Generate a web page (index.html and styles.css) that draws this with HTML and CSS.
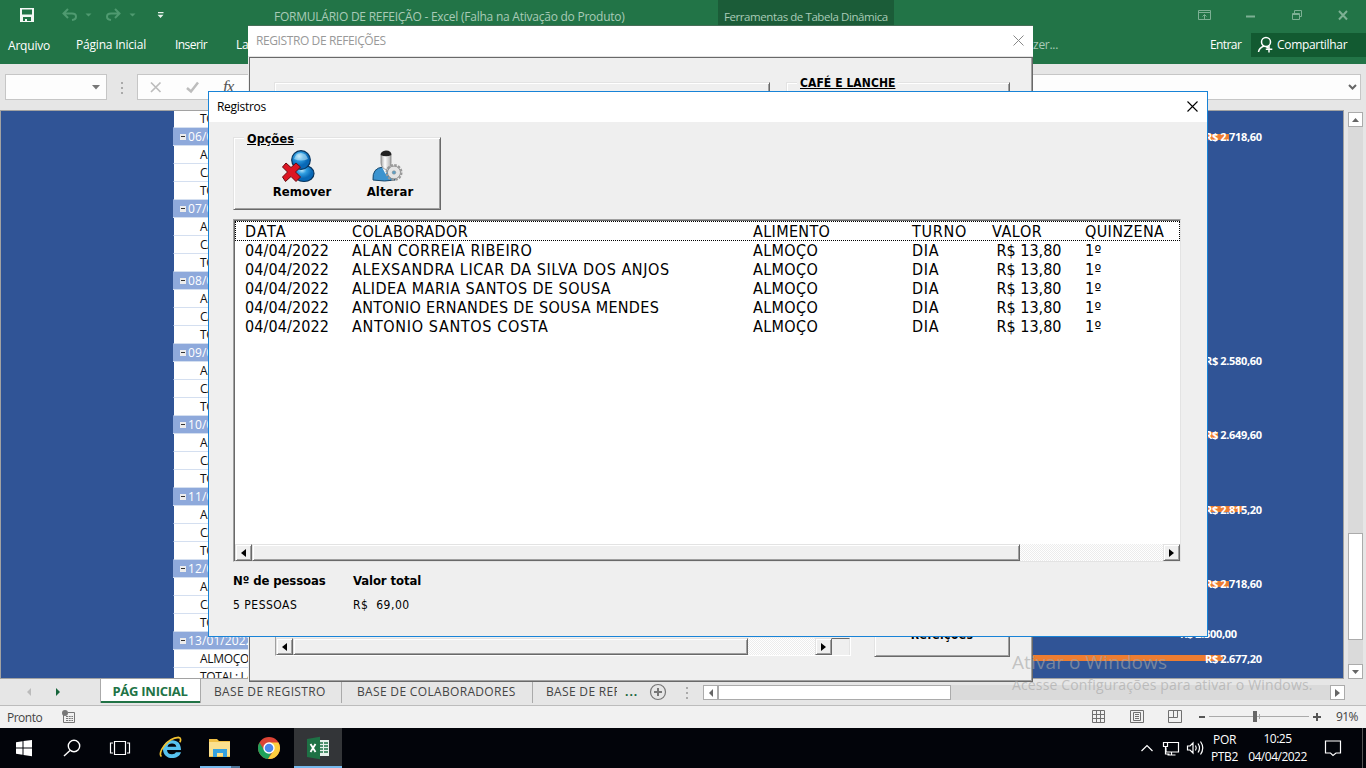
FILE: index.html
```html
<!DOCTYPE html>
<html lang="pt-BR">
<head>
<meta charset="utf-8">
<title>FORMULÁRIO DE REFEIÇÃO - Excel</title>
<link rel="stylesheet" href="styles.css">
</head>
<body>
<div class="desktop">
  <header class="titlebar">
    <svg class="quick" width="180" height="30" viewBox="0 0 180 30">
      <path fill="#f4f8f5" fill-rule="evenodd" d="M20 8h14v14H20zM22 9.500v5h10v-5zM23 17v4h2v-2h2v2h4v-4z"/>
      <g fill="none" stroke="#4f9a70" stroke-width="2"><path d="M68 9l-4.500 4.500 4.500 4.500M64 13.500h8q4 0 4 3.200 0 2.800-4 3.300"/><path d="M115 9l4.500 4.500-4.500 4.500M119 13.500h-8q-4 0-4 3.200 0 2.800 4 3.300"/></g>
      <path fill="#4f9a70" d="M85.500 13.500h6l-3 3zM129.500 13.500h6l-3 3z"/><path fill="#e8f2ec" d="M158 12h5.500v1.300H158zM157.500 14.800h6l-3 3.200z"/>
    </svg>
    <span class="doc-name">FORMULÁRIO DE REFEIÇÃO - Excel (Falha na Ativação do Produto)</span>
    <span class="context-tab">Ferramentas de Tabela Dinâmica</span>
    <svg class="win-controls" width="160" height="30" viewBox="1196 0 160 30" fill="none" stroke="#7db094">
      <path d="M1198.500 10.500h12v9h-12zM1198.500 12.500h12M1204.500 19v-4.500M1202.500 16.500l2-2 2 2"/><path d="M1246 16.500h9" stroke-width="2"/>
      <path d="M1292.500 13.500h7v6h-7zM1292 14.500h8M1294.500 13v-2.500h7v6h-2"/><path d="M1339 11l8 8.500M1347 11l-8 8.500" stroke-width="2"/>
    </svg>
  </header>
  <nav class="ribbon">
    <span class="file">Arquivo</span><span class="home">Página Inicial</span><span class="insert">Inserir</span><span class="lay">La</span>
    <span class="tell">fazer...</span><span class="sign">Entrar</span>
    <span class="share"><svg width="18" height="18" viewBox="0 0 18 18" fill="none" stroke="#fff" stroke-width="1.500"><circle cx="9" cy="6" r="4.500"/><path d="M7 10q-5 2-5.500 6M9 10.500l2 1.500M12 10v6.500M8.800 13.200h6.500"/></svg>Compartilhar</span>
  </nav>
  <section class="formula">
    <div class="namebox"><svg width="8" height="5"><path d="M0 0h8l-4 4.500z" fill="#777"/></svg></div>
    <div class="dots"><i></i><i></i><i></i></div>
    <div class="formula-box">
      <svg width="110" height="26" viewBox="138 75 110 26" fill="none"><path d="M151 82.500l9.500 9.500M160.500 82.500l-9.500 9.500" stroke="#bdbdbd" stroke-width="1.700"/><path d="M187 88l4 3.500 7-9" stroke="#bdbdbd" stroke-width="2.500"/></svg><em class="fx">fx</em>
      <svg class="expand" width="9" height="7" fill="none"><path d="M1 1l3.500 3.500L8 1" stroke="#666" stroke-width="2"/></svg>
    </div>
  </section>
  <section class="workspace">
    <div class="sheet">
      <div class="pivot">
        <p class="first">TOTAL</p>
        <p class="day"><i></i>06/01/2022</p><p>ALMOÇO</p><p>CAFÉ</p><p>TOTAL</p>
        <p class="day"><i></i>07/01/2022</p><p>ALMOÇO</p><p>CAFÉ</p><p>TOTAL</p>
        <p class="day"><i></i>08/01/2022</p><p>ALMOÇO</p><p>CAFÉ</p><p>TOTAL</p>
        <p class="day"><i></i>09/01/2022</p><p>ALMOÇO</p><p>CAFÉ</p><p>TOTAL</p>
        <p class="day"><i></i>10/01/2022</p><p>ALMOÇO</p><p>CAFÉ</p><p>TOTAL</p>
        <p class="day"><i></i>11/01/2022</p><p>ALMOÇO</p><p>CAFÉ</p><p>TOTAL</p>
        <p class="day"><i></i>12/01/2022</p><p>ALMOÇO</p><p>CAFÉ</p><p>TOTAL</p>
        <p class="day"><i></i>13/01/2022</p><p>ALMOÇO</p><p>TOTAL: LANCHE</p>
      </div>
      <div class="chart">
        <div class="bar" style="top:23px;width:229px"></div><b style="top:18px">R$ 2.718,60</b>
        <div class="bar" style="top:247px;width:208px"></div><b style="top:242px">R$ 2.580,60</b>
        <div class="bar" style="top:321px;width:218px"></div><b style="top:316px">R$ 2.649,60</b>
        <div class="bar" style="top:395px;width:242px"></div><b style="top:391px">R$ 2.815,20</b>
        <div class="bar" style="top:470px;width:229px"></div><b style="top:465px">R$ 2.718,60</b>
        <b class="low" style="top:515px">R$ 2.300,00</b>
        <div class="bar" style="top:544px;width:223px"></div><b style="top:540px">R$ 2.677,20</b>
      </div>
    </div>
    <div class="vscroll">
      <span class="sb"><svg width="7" height="4"><path d="M0 4h7l-3.500-4z" fill="#666"/></svg></span>
      <span class="vthumb"></span>
      <span class="sb vdown"><svg width="7" height="4"><path d="M0 0h7l-3.500 4z" fill="#666"/></svg></span>
    </div>
  </section>
  <nav class="tabs">
    <svg class="tabnav" width="100" height="28"><path d="M31 9v8l-4-4z" fill="#bbb"/><path d="M56 9v8l4-4z" fill="#16653b"/></svg>
    <b class="active">PÁG INICIAL</b><span class="t1">BASE DE REGISTRO</span><span class="t2">BASE DE COLABORADORES</span><span class="t3"><i>BASE DE REF</i></span>
    <b class="more">...</b>
    <svg class="plus" width="18" height="18" fill="none" stroke="#777"><circle cx="9" cy="9" r="7.500" stroke-width="1.200"/><path d="M5 9h8M9 5v8" stroke-width="2"/></svg>
    <div class="dots tabdots"><i></i><i></i><i></i></div>
    <div class="hscroll"><span class="sb"><svg width="4" height="8"><path d="M4 0v8l-4-4z" fill="#666"/></svg></span><span class="hthumb"></span><span class="sb hright"><svg width="5" height="8"><path d="M0 0v8l5-4z" fill="#666"/></svg></span></div>
  </nav>
  <footer class="status">
    <span class="ready">Pronto</span>
    <svg width="14" height="14" viewBox="0 0 14 14"><path d="M1.500 5v7.500h11v-10H6" fill="none" stroke="#777"/><circle cx="3" cy="3" r="3" fill="#777"/><path d="M4 6.500h7M4 8.500h7M4 10.500h7" stroke="#777" stroke-dasharray="2 .7"/></svg>
    <svg class="views" width="240" height="22" viewBox="1090 706 240 22" fill="none" stroke="#707070">
      <path d="M1092.500 710.500h12v12h-12zM1092 714.500h13M1092 718.500h13M1096.500 710v13M1100.500 710v13"/>
      <path d="M1130.500 710.500h13v12h-13zM1133.500 712.500h7v8h-7zM1135 714.500h4M1135 716.500h4M1135 718.500h4"/>
      <path d="M1168.500 710.500h13v12h-13zM1173.500 710v7.500M1168 717.500h9.500v-7"/>
      <path d="M1199 717h6M1313 717h8M1317 713v8" stroke="#555" stroke-width="2"/><path d="M1209 716.500h100M1259.500 714v5" stroke="#aaa"/><path d="M1255 711v11" stroke="#666" stroke-width="4"/>
    </svg>
    <span class="pct">91%</span>
  </footer>
  <footer class="taskbar">
    <svg class="apps" width="342" height="40" viewBox="0 728 342 40">
      <path fill="#333538" d="M294 728h48v40h-48z"/><path fill="#76b9ed" d="M200 766h31v2h-31zM294 766h48v2h-48z"/><path fill="#4c7396" d="M231 766h9v2h-9z"/>
      <path fill="#fff" d="M16 742.200l6.500-.9v6.200H16zM23.500 741.100l8.500-1.200v7.600h-8.500zM16 748.500h6.500v6.200l-6.500-.9zM23.500 748.500H32v7.700l-8.500-1.200z"/>
      <g fill="none" stroke="#fff" stroke-width="1.400"><circle cx="74" cy="746" r="5.700"/><path d="M70 750.500l-6 5.500"/><path stroke-width="1.200" d="M114.500 741.500h11v13h-11zM113 743h-2.500v10h2.500M127 743h2.500v10H127"/></g>
      <path d="M181 750h-14q.3 4.200 5 4.200 3 0 4-2h5c-1 3.800-4.500 5.800-9 5.800-5.500 0-9-3.700-9-8.800s4-9 9.100-9c5.700 0 8.900 3.700 8.900 9.800zM167.500 746.800h8.800q-.6-3.300-4.300-3.300t-4.500 3.300z" fill="#57c3ef" fill-rule="evenodd"/>
      <path d="M161.500 756.500c-4.500-3 5.500-18.500 17-19.200 2.500 0 2.500 3.500 1.300 5" fill="none" stroke="#f2c230" stroke-width="1.700"/>
      <path d="M209 739h8l2 2h11v16h-21z" fill="#f0bf45"/><path d="M209 742h21v14h-21z" fill="#fbe08e"/><path d="M213 757v-8h14v8h-4v-4h-6v4z" fill="#36a2df"/>
      <g><circle cx="269" cy="748" r="11" fill="#dc4335"/><path d="M259.500 742.500A11 11 0 0 0 268 759l5-9-9 0z" fill="#1ea25a"/><path d="M269 742.500h9.500A11 11 0 0 1 268 759l5.500-8z" fill="#fdcf3f"/><circle cx="269" cy="748" r="5.700" fill="#fff"/><circle cx="269" cy="748" r="4.300" fill="#4b86ed"/></g>
      <path d="M318 740h11v16h-11z" fill="#e7f1eb"/><path d="M320 743h3M324 743h4M320 746h3M324 746h4M320 749h3M324 749h4M320 752h3M324 752h4" stroke="#1e7145" stroke-width="1.500"/><path d="M307 739l13-2.300v22.500l-13-2.300z" fill="#1e7145"/><path d="M310.500 744l5 8M315.500 744l-5 8" stroke="#fff" stroke-width="1.800"/>
    </svg>
    <svg class="tray" width="68" height="40" viewBox="1138 728 68 40" fill="none" stroke="#fff" stroke-width="1.200"><path d="M1141.500 751l5.500-5.500 5.500 5.500"/><path d="M1168 742.500h10.500v9.500H1166v-4.500M1171.500 752v3M1167.500 755h8M1163.500 742.500h4v4h-4zM1165.500 747v7h4"/><path d="M1187.500 746v4h2.500l3 3v-10l-3 3zM1195.500 745.500q1.500 2.500 0 5M1198 743.500q3 4.500 0 9M1200.500 741.500q4.500 6.500 0 13"/></svg>
    <div class="lang">POR<br>PTB2</div><div class="clock">10:25<br>04/04/2022</div>
    <svg class="notice" width="18" height="18" fill="none" stroke="#fff" stroke-width="1.200"><path d="M1.500 2h15v12H12l-3 2.500L6.500 14h-5z"/></svg>
    <i class="peek"></i>
  </footer>

  <section class="form-window">
    <div class="form-title"><span>REGISTRO DE REFEIÇÕES</span><svg width="11" height="11" stroke="#888"><path d="M.5.5l10 10M10.500.5l-10 10"/></svg></div>
    <div class="form-body">
      <div class="form-top"><div class="frame f1"></div><div class="frame f2"><b>CAFÉ E LANCHE</b></div></div>
      <div class="form-bottom">
        <div class="list-end"><span class="btn arrow"><svg width="5" height="8"><path d="M5 0v8l-5-4z"/></svg></span><span class="btn grow"></span><span class="hatch"></span><span class="btn arrow"><svg width="5" height="8"><path d="M0 0v8l5-4z"/></svg></span><span class="corner"></span></div>
        <div class="btn refs"><b>Refeições</b></div>
      </div>
    </div>
  </section>

  <section class="records">
    <div class="rec-title"><span>Registros</span><svg width="11" height="11" stroke="#000" stroke-width="1.100"><path d="M.5.5l10 10M10.500.5l-10 10"/></svg></div>
    <div class="rec-body">
      <div class="frame options"><b class="legend">Opções</b>
        <button class="opt rem"><svg width="34" height="34" viewBox="0 0 34 34">
          <defs><radialGradient id="blue" cx=".4" cy=".3"><stop offset="0" stop-color="#b7e4fa"/><stop offset=".45" stop-color="#2f9de0"/><stop offset="1" stop-color="#0868b6"/></radialGradient></defs>
          <ellipse cx="23" cy="24.500" rx="10" ry="8" fill="url(#blue)" stroke="#07335c" stroke-width="1.200"/><circle cx="20" cy="11" r="9.300" fill="url(#blue)" stroke="#07335c" stroke-width="1.200"/><path d="M13 10q2-6 7-6t7 6q-7 3-14 0" fill="#d8f1fc" opacity=".5"/>
          <path d="M5 14l5 4.500 5-4.500 4.500 4-5 5 5 5-4.500 4.500-5-5-5.500 5L1.500 28l5-5-5-5z" fill="#dc1522" stroke="#650b10"/></svg><span>Remover</span></button>
        <button class="opt alt"><svg width="34" height="34" viewBox="0 0 34 34">
          <defs><linearGradient id="face"><stop offset="0" stop-color="#aaa"/><stop offset=".4" stop-color="#fff"/><stop offset="1" stop-color="#aaa"/></linearGradient></defs>
          <path d="M3 31q-1-12 10-13h3q8 1 9 13-10 2-22 0z" fill="#3b93cf" stroke="#17476b"/><path d="M12 18l3.500 7 4-7z" fill="#fff"/><path d="M11 6q5-5 10 0v8q-.5 5.500-5 6.500-4.500-1-5-6.500z" fill="url(#face)" stroke="#777" stroke-width=".7"/><path d="M10.500 6q0-4 5.500-4.500 5.500 0 5.500 4.500-5.500 2.500-11 0z" fill="#222"/>
          <circle cx="24" cy="23.500" r="6.500" fill="#dedede" stroke="#777" stroke-width=".8"/><circle cx="24" cy="23.500" r="7.500" fill="none" stroke="#999" stroke-width="2" stroke-dasharray="2.500 1.430"/><circle cx="24" cy="23.500" r="5.500" fill="#e4e4e4"/><circle cx="24" cy="23.500" r="1.800" fill="#5e9fc5" stroke="#888" stroke-width=".5"/></svg><span>Alterar</span></button>
      </div>
      <div class="listbox">
        <div class="row head"><span>DATA</span><span>COLABORADOR</span><span>ALIMENTO</span><span>TURNO</span><span>VALOR</span><span>QUINZENA</span></div>
        <div class="row"><span>04/04/2022</span><span>ALAN CORREIA RIBEIRO</span><span>ALMOÇO</span><span>DIA</span><span>&nbsp;R$ 13,80</span><span>1º</span></div>
        <div class="row"><span>04/04/2022</span><span>ALEXSANDRA LICAR DA SILVA DOS ANJOS</span><span>ALMOÇO</span><span>DIA</span><span>&nbsp;R$ 13,80</span><span>1º</span></div>
        <div class="row"><span>04/04/2022</span><span>ALIDEA MARIA SANTOS DE SOUSA</span><span>ALMOÇO</span><span>DIA</span><span>&nbsp;R$ 13,80</span><span>1º</span></div>
        <div class="row"><span>04/04/2022</span><span>ANTONIO ERNANDES DE SOUSA MENDES</span><span>ALMOÇO</span><span>DIA</span><span>&nbsp;R$ 13,80</span><span>1º</span></div>
        <div class="row"><span>04/04/2022</span><span>ANTONIO SANTOS COSTA</span><span>ALMOÇO</span><span>DIA</span><span>&nbsp;R$ 13,80</span><span>1º</span></div>
        <div class="list-scroll"><span class="btn arrow"><svg width="5" height="8"><path d="M5 0v8l-5-4z"/></svg></span><span class="btn grow"></span><span class="hatch"></span><span class="btn arrow"><svg width="5" height="8"><path d="M0 0v8l5-4z"/></svg></span></div>
      </div>
      <div class="totals"><div><b>Nº de pessoas</b><span>5 PESSOAS</span></div><div><b>Valor total</b><span>R$&nbsp; 69,00</span></div></div>
    </div>
  </section>
  <div class="watermark"><div>Ativar o Windows</div><p>Acesse Configurações para ativar o Windows.</p></div>
</div>
</body>
</html>
```
FILE: styles.css
```css
* { box-sizing: border-box; }
body { margin: 0; overflow: hidden; }
p { margin: 0; }
svg { flex: none; }
i { font-style: normal; }
.desktop { position: relative; width: 1366px; height: 768px; display: flex; flex-direction: column; overflow: hidden; font: 12px/16px "Open Sans", sans-serif; white-space: nowrap; background: #e6e6e6; }

.titlebar { display: flex; height: 30px; background: #227447; color: #a9cbb7; }
.quick { margin-right: 94px; }
.doc-name { width: 444px; padding-top: 9px; letter-spacing: -.24px; }
.context-tab { width: 176px; height: 27px; padding: 9px 0 0 6px; background: #1b5c38; font-size: 11.5px; letter-spacing: -.42px; }
.win-controls { margin-left: 302px; }

.ribbon { display: flex; height: 34px; background: #227447; color: #fff; line-height: 30px; letter-spacing: -.2px; }
.file { width: 76px; padding: 1px 0 0 8px; }
.home { width: 99px; }
.insert { width: 61px; letter-spacing: -.55px; }
.lay { width: 787px; }
.tell { width: 187px; color: #a9cbb7; letter-spacing: -.3px; }
.sign { width: 41px; letter-spacing: -.6px; }
.share { display: flex; flex: 1; gap: 2px; align-items: center; height: 24px; margin-top: 3px; padding-left: 6px; background: #125a31; letter-spacing: -.32px; }

.formula { display: flex; height: 46px; padding: 10px 5px 0; }
.namebox { display: flex; align-items: center; justify-content: flex-end; width: 102px; height: 26px; padding-right: 6px; border: 1px solid #c6c6c6; background: #fdfdfd; }
.dots { display: flex; flex-direction: column; gap: 3px; width: 30px; padding: 8px 0 0 14px; }
.dots i { width: 2px; height: 2px; background: #aaa; }
.formula-box { display: flex; flex: 1; height: 26px; border: 1px solid #c6c6c6; background: #fdfdfd; }
.fx { margin-left: -25px; font: italic 17px/24px "Liberation Serif", serif; color: #555; letter-spacing: -1px; }
.expand { margin: 9px 3px 0 auto; }

.workspace { display: flex; height: 569px; }
.sheet { display: flex; width: 1344px; border: 1px solid #a2a2a2; background: #305496; overflow: hidden; }
.pivot { width: 75px; flex: none; margin-left: 172px; background: #fff; overflow: hidden; color: #111; }
.pivot p { height: 18px; padding-left: 26px; border-left: 1px solid #305496; border-bottom: 1px solid #d4dff0; line-height: 18px; letter-spacing: -.3px; }
.pivot .first { height: 17px; line-height: 16px; }
.pivot .day { display: flex; align-items: center; gap: 2px; padding-left: 7px; border-left: 0; background: #8ea9db; color: #fff; letter-spacing: .1px; }
.day i { flex: none; width: 6px; height: 6px; background: linear-gradient(#333, #333) center / 4px 1px no-repeat #ececec; }
.chart { position: relative; flex: 1; margin-left: 752px; }
.bar { position: absolute; left: 0; height: 6px; background: #ed7d31; }
.chart b { position: absolute; left: 205px; color: #fff; font-size: 11px; letter-spacing: -.35px; }
.chart .low { left: 180px; }
.vscroll { display: flex; flex-direction: column; width: 15px; margin: 2px 0 0 4px; background: #dadada; }
.sb { display: flex; align-items: center; justify-content: center; width: 15px; height: 15px; border: 1px solid #ababab; background: #fff; flex: none; }
.vthumb { height: 107px; margin-top: 406px; border: 1px solid #ababab; background: #fff; }
.vdown { margin-top: auto; }

.tabs { display: flex; height: 27px; color: #444; line-height: 26px; border-bottom: 1px solid #bcbcbc; }
.active { width: 101px; height: 24px; text-align: center; background: #fff; color: #217346; border: solid #aaa; border-width: 0 1px; box-shadow: inset 0 -2px #217346; font-size: 13px; line-height: 25px; letter-spacing: -.25px; padding-right: 1px; }
.t1, .t2, .t3 { height: 24px; letter-spacing: .33px; }
.t1 { width: 141px; padding-left: 13px; border-right: 1px solid #aaa; }
.t2 { width: 191px; padding-left: 15px; border-right: 1px solid #aaa; }
.t3 { width: 92px; padding-left: 13px; }
.t3 i { display: block; width: 71px; overflow: hidden; }
.more { width: 24px; color: #16653b; letter-spacing: 1px; }
.plus { margin-top: 4px; }
.tabdots { width: 36px; padding: 8px 0 0 19px; }
.hscroll { display: flex; width: 642px; height: 15px; margin-top: 6px; background: #dadada; }
.hthumb { width: 233px; border: 1px solid #ababab; background: #fff; }
.hright { margin-left: auto; }

.status { display: flex; height: 22px; align-items: center; background: #f1f1f1; color: #444; }
.ready { width: 62px; padding: 1px 0 0 7px; letter-spacing: -.5px; }
.views { margin-left: 1014px; }
.pct { margin-left: 6px; letter-spacing: -.6px; }

.taskbar { display: flex; height: 40px; background: #02040a; color: #fff; text-align: center; }
.tray { margin-left: 796px; }
.lang { width: 37px; padding-top: 3px; line-height: 17px; letter-spacing: -.3px; }
.clock { width: 69px; padding-top: 2px; line-height: 18px; letter-spacing: -.5px; }
.notice { margin: 11px 0 0 12px; }
.peek { width: 1px; margin-left: 20px; background: #555; }

.btn { display: flex; align-items: center; justify-content: center; border: 1px solid; border-color: #e3e3e3 #696969 #696969 #e3e3e3; background: #efefef; box-shadow: inset 1px 1px #fff, inset -1px -1px #a0a0a0; flex: none; }
.arrow { width: 17px; }
.hatch { flex: 1; background: repeating-conic-gradient(#fff 0 25%, #ececec 0 50%) 0 0 / 2px 2px; }
.frame { position: relative; border: 1px solid; border-color: #e3e3e3 #696969 #696969 #e3e3e3; box-shadow: inset 1px 1px #fff, inset -1px -1px #a0a0a0; }

.form-window { position: absolute; left: 248px; top: 26px; width: 785px; height: 656px; display: flex; flex-direction: column; background: #efefef; box-shadow: 0 -1px #476e58; }
.form-title { display: flex; justify-content: space-between; height: 31px; padding: 7px 9px 0 8px; background: #fff; border-bottom: 1px solid #e3e3e3; color: #999; }
.form-title span { letter-spacing: -.4px; }
.form-title svg { margin-top: 2px; }
.form-body { display: flex; flex: 1; flex-direction: column; justify-content: space-between; margin-left: 1px; border: 1px solid #696969; box-shadow: inset -1px -1px #a0a0a0; }
.form-top { display: flex; gap: 16px; padding: 24px 0 0 24px; font: bold 12px/16px "DejaVu Sans Condensed", "DejaVu Sans", sans-serif; }
.f1 { width: 496px; height: 100px; }
.f2 { width: 224px; height: 100px; }
.f2 b { position: absolute; left: 10px; top: -8px; padding: 0 3px; background: #efefef; text-decoration: underline; text-underline-offset: 1px; letter-spacing: .07px; }
.form-bottom { display: flex; align-items: flex-start; height: 63px; padding-left: 25px; }
.list-end { display: flex; width: 576px; height: 38px; padding-top: 19px; border: 1px solid; border-color: transparent #fff #fff #a0a0a0; }
.list-end .grow { width: 455px; }
.corner { width: 18px; border-top: 1px solid #696969; border-right: 1px solid #e3e3e3; }
.refs { width: 136px; height: 39px; margin-left: 23px; align-items: flex-end; padding-bottom: 13px; font: bold 12px/16px "DejaVu Sans Condensed", "DejaVu Sans", sans-serif; letter-spacing: .4px; }

.records { position: absolute; left: 208px; top: 91px; width: 1000px; height: 546px; border: 1px solid #1883d7; background: #efefef; color: #000; }
.rec-title { display: flex; justify-content: space-between; height: 30px; padding: 7px 9px 0 8px; background: #fff; letter-spacing: -.3px; }
.rec-title svg { margin-top: 2px; }
.rec-body { padding: 15px 24px 0; font-family: "DejaVu Sans Condensed", "DejaVu Sans", sans-serif; }
.options { display: flex; width: 208px; height: 73px; }
.legend { position: absolute; left: 10px; top: -7px; padding: 0 3px; background: #efefef; text-decoration: underline; text-underline-offset: 1px; font-size: 12.5px; letter-spacing: .1px; }
.opt { display: flex; flex-direction: column; align-items: center; border: 0; padding: 0; background: none; font: bold 13px/16px "DejaVu Sans Condensed", "DejaVu Sans", sans-serif; color: #000; }
.opt svg { margin-bottom: 1px; }
.rem { width: 64px; margin: 11px 0 0 36px; }
.rem svg { margin-left: -8px; }
.alt { width: 60px; margin: 11px 0 0 26px; letter-spacing: .1px; }
.alt svg { margin-left: -6px; }
.listbox { display: flex; flex-direction: column; height: 343px; width: 948px; margin-top: 9px; border: 1px solid; border-color: #a0a0a0 #e3e3e3 #e3e3e3 #a0a0a0; background: #fff; box-shadow: inset 1px 1px #696969; }
.row { display: grid; grid-template-columns: 107px 401px 159px 80px 93px 1fr; height: 19px; margin-left: 1px; padding-left: 10px; font-size: 16px; line-height: 19px; letter-spacing: .35px; }
.row span:nth-child(1) { letter-spacing: .1px; }
.row span:nth-child(2) { letter-spacing: .45px; }
.row:nth-child(3) span:nth-child(2) { letter-spacing: .56px; }
.row:nth-child(5) span:nth-child(2) { letter-spacing: .31px; }
.row:nth-child(6) span:nth-child(2) { letter-spacing: .65px; }
.row span:nth-child(4) { letter-spacing: .7px; }
.row span:nth-child(5) { letter-spacing: 0; }
.row.head span:nth-child(1) { letter-spacing: 1.3px; }
.row.head span:nth-child(2) { letter-spacing: .35px; }
.row.head span:nth-child(5) { letter-spacing: .6px; }
.head { height: 20px; margin-top: 1px; padding-left: 9px; border: 1px dotted #000; }
.list-scroll { display: flex; height: 17px; margin: auto 0 0 1px; }
.list-scroll .grow { width: 768px; }
.totals { display: flex; padding-top: 11px; }
.totals div { width: 120px; display: flex; flex-direction: column; gap: 8px; }
.totals b { font-size: 13px; letter-spacing: -.1px; }
.totals span { letter-spacing: .5px; }
.watermark { position: absolute; left: 1012px; top: 649px; color: rgba(165,165,165,.62); }
.watermark div { font-size: 19px; line-height: 26px; letter-spacing: .1px; }
.watermark p { margin-top: 1px; font-size: 14px; line-height: 18px; letter-spacing: .14px; }
```
